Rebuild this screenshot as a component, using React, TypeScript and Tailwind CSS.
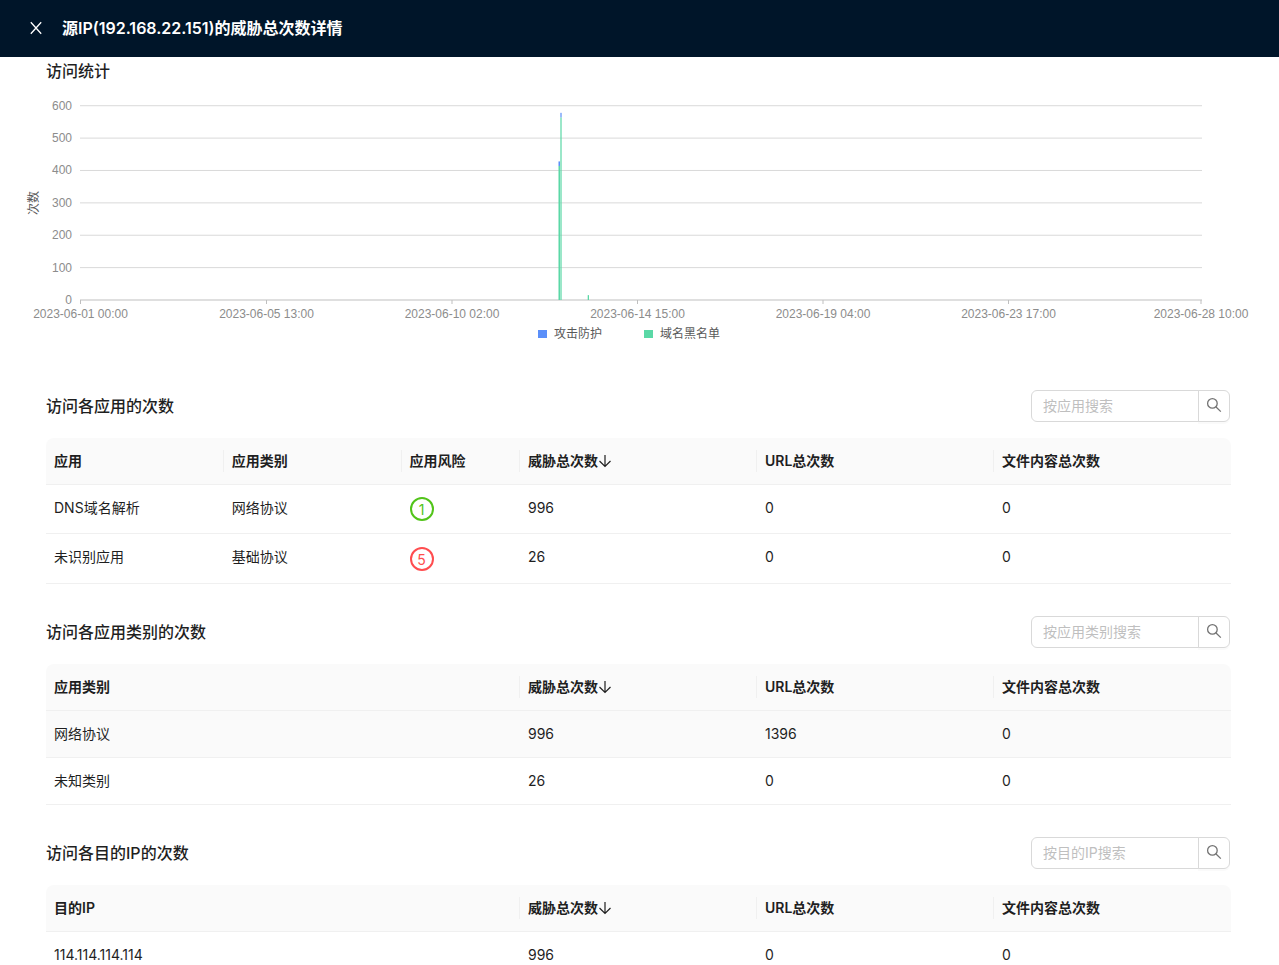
import React, { useState } from 'react';

interface Column {
  key: string;
  title: string;
  width: string;
  sorted?: boolean;
}

interface StatTableProps {
  id: string;
  title: string;
  placeholder: string;
  columns: Column[];
  rows: Record<string, string>[];
  activeRow?: number;
}

const countColumns: Column[] = [
  { key: 'threat', title: '威胁总次数', width: 'w-[20%]', sorted: true },
  { key: 'url', title: 'URL总次数', width: 'w-[20%]' },
  { key: 'file', title: '文件内容总次数', width: 'w-[20%]' },
];

const appColumns: Column[] = [
  { key: 'app', title: '应用', width: 'w-[15%]' },
  { key: 'category', title: '应用类别', width: 'w-[15%]' },
  { key: 'risk', title: '应用风险', width: 'w-[10%]' },
  ...countColumns,
];

const appRows = [
  { app: 'DNS域名解析', category: '网络协议', risk: '1', threat: '996', url: '0', file: '0' },
  { app: '未识别应用', category: '基础协议', risk: '5', threat: '26', url: '0', file: '0' },
];

const categoryRows = [
  { category: '网络协议', threat: '996', url: '1396', file: '0' },
  { category: '未知类别', threat: '26', url: '0', file: '0' },
];

const ipRows = [{ ip: '114.114.114.114', threat: '996', url: '0', file: '0' }];

const CloseIcon: React.FC = () => (
  <svg viewBox="0 0 16 16" className="h-4 w-4" fill="none" stroke="currentColor" strokeWidth="1.3">
    <path d="M2.8 2.2 13.2 13.8M13.2 2.2 2.8 13.8" />
  </svg>
);

const SearchIcon: React.FC = () => (
  <svg viewBox="0 0 16 16" className="h-4 w-4" fill="none" stroke="currentColor" strokeWidth="1.3">
    <circle cx="6.4" cy="6.4" r="4.8" />
    <path d="m9.8 9.8 5 4.8" />
  </svg>
);

const ArrowDownIcon: React.FC = () => (
  <svg viewBox="0 0 14 14" className="h-3.5 w-3.5" fill="none" stroke="currentColor" strokeWidth="1.2">
    <path d="M7 1v11.4M1.5 7 7 12.4 12.5 7" />
  </svg>
);

const RiskBadge: React.FC<{ level: string }> = ({ level }) => (
  <span
    className={`flex h-6 w-6 items-center justify-center rounded-full border-2 pt-0.5 leading-5 ${
      Number(level) > 3 ? 'border-[#ff4d4f] text-[#ff4d4f]' : 'border-[#52c41a] text-[#52c41a]'
    }`}
  >
    {level}
  </span>
);

const StatTable: React.FC<StatTableProps> = ({ id, title, placeholder, columns, rows, activeRow }) => {
  const [keyword, setKeyword] = useState('');
  const hasRisk = columns.some((column) => column.key === 'risk');
  const visibleRows = rows.filter((row) => row[columns[0].key].includes(keyword));

  return (
    <section className="mt-8">
      <div className="mb-4 flex items-center justify-between pr-px">
        <h2 className="text-base font-medium">{title}</h2>
        <form className="flex h-8" onSubmit={(e) => e.preventDefault()}>
          <input
            id={id}
            type="text"
            aria-label={placeholder}
            placeholder={placeholder}
            value={keyword}
            onChange={(e) => setKeyword(e.target.value)}
            className="w-[168px] rounded-l-md border border-[#d9d9d9] px-[11px] text-sm outline-none placeholder:text-[#bfbfbf]"
          />
          <button
            type="submit"
            aria-label="搜索"
            className="-ml-px flex w-8 items-center justify-center rounded-r-md border border-[#d9d9d9] pb-0.5 text-[#737373] shadow-[0_2px_0_rgba(0,0,0,0.02)]"
          >
            <SearchIcon />
          </button>
        </form>
      </div>

      <table className="w-full table-fixed border-separate border-spacing-0 text-left text-sm leading-[22px]">
        <thead>
          <tr>
            {columns.map((column, index) => (
              <th
                key={column.key}
                scope="col"
                className={`relative border-b border-[#f0f0f0] bg-[#fafafa] px-2 py-3 font-semibold first:rounded-tl-lg last:rounded-tr-lg ${column.width}`}
              >
                <span className="flex items-center">
                  {column.title}
                  {column.sorted && <ArrowDownIcon />}
                </span>
                {/* Column divider */}
                {index < columns.length - 1 && (
                  <span className="absolute top-3 right-0 h-[22px] w-px bg-[#f0f0f0]" />
                )}
              </th>
            ))}
          </tr>
        </thead>
        <tbody>
          {visibleRows.map((row, index) => (
            <tr
              key={row[columns[0].key]}
              className={`${index === activeRow ? 'bg-[#fafafa]' : 'hover:bg-[#fafafa]'} ${
                hasRisk ? 'h-[49px] last:h-[50px]' : 'h-[47px]'
              }`}
            >
              {columns.map((column) => (
                <td
                  key={column.key}
                  className={`border-b border-[#f0f0f0] px-2 py-3 ${
                    column.key === 'risk' ? 'align-middle' : 'align-top'
                  }`}
                >
                  {column.key === 'risk' ? <RiskBadge level={row.risk} /> : row[column.key]}
                </td>
              ))}
            </tr>
          ))}
        </tbody>
      </table>
    </section>
  );
};

const yTicks = [600, 500, 400, 300, 200, 100, 0];

const xTicks = [
  { x: 80.5, label: '2023-06-01 00:00' },
  { x: 266.5, label: '2023-06-05 13:00' },
  { x: 452, label: '2023-06-10 02:00' },
  { x: 637.5, label: '2023-06-14 15:00' },
  { x: 823, label: '2023-06-19 04:00' },
  { x: 1008.5, label: '2023-06-23 17:00' },
  { x: 1201, label: '2023-06-28 10:00' },
];

const bars = [
  { x: 558.5, width: 1.5, blacklist: 414, attack: 14 },
  { x: 560.4, width: 1.2, blacklist: 564, attack: 14 },
  { x: 587.7, width: 1.3, blacklist: 15, attack: 0 },
];

const baseline = 215;
const toHeight = (value: number) => value * 0.3238;

const VisitChart: React.FC = () => (
  <svg
    viewBox="0 0 1279 273"
    className="block h-auto w-full font-['Liberation_Sans','Noto_Sans_CJK_SC',sans-serif] text-xs"
    role="img"
    aria-label="访问统计"
  >
    {yTicks.map((tick) => {
      const y = baseline - toHeight(tick);
      return (
        <g key={tick}>
          <line x1="80" x2="1202" y1={y} y2={y} stroke={tick === 0 ? '#bfbfbf' : '#d9d9d9'} />
          <text x="72" y={y + 4} textAnchor="end" fill="#8c8c8c">
            {tick}
          </text>
        </g>
      );
    })}
    {xTicks.map((tick) => (
      <g key={tick.label}>
        <line x1={tick.x} x2={tick.x} y1={baseline} y2={baseline + 4} stroke="#bfbfbf" />
        <text x={tick.x} y={baseline + 18} textAnchor="middle" fill="#8c8c8c">
          {tick.label}
        </text>
      </g>
    ))}
    <text transform={`translate(38 ${baseline - 97}) rotate(-90)`} textAnchor="middle" fill="#595959">
      次数
    </text>

    {/* Stacked bars */}
    {bars.map((bar) => (
      <g key={bar.x}>
        <rect
          x={bar.x}
          y={baseline - toHeight(bar.blacklist)}
          width={bar.width}
          height={toHeight(bar.blacklist)}
          fill="#5ad8a6"
        />
        <rect
          x={bar.x}
          y={baseline - toHeight(bar.blacklist + bar.attack)}
          width={bar.width}
          height={toHeight(bar.attack)}
          fill="#5b8ff9"
        />
      </g>
    ))}

    {/* Legend */}
    <rect x="538" y="245" width="9" height="8" fill="#5b8ff9" />
    <text x="554" y="253" fill="#595959">
      攻击防护
    </text>
    <rect x="644" y="245" width="9" height="8" fill="#5ad8a6" />
    <text x="660" y="253" fill="#595959">
      域名黑名单
    </text>
  </svg>
);

const App: React.FC = () => {
  return (
    <div className="min-h-screen bg-white font-['Inter','Noto_Sans_CJK_SC',sans-serif] text-[#1f1f1f]">
      <header className="flex h-[57px] items-center bg-[#001529] px-7 pb-0.5 text-white">
        <button type="button" aria-label="关闭" className="mr-[18px]">
          <CloseIcon />
        </button>
        <h1 className="text-base font-semibold">源IP(192.168.22.151)的威胁总次数详情</h1>
      </header>

      <main className="pb-8">
        <h2 className="px-[46px] py-0.5 text-base font-medium">访问统计</h2>
        <VisitChart />
        <div className="pr-12 pl-[46px]">
          <StatTable id="search-app" title="访问各应用的次数" placeholder="按应用搜索" columns={appColumns} rows={appRows} />
          <StatTable
            id="search-category"
            title="访问各应用类别的次数"
            placeholder="按应用类别搜索"
            columns={[{ key: 'category', title: '应用类别', width: 'w-[40%]' }, ...countColumns]}
            rows={categoryRows}
            activeRow={0}
          />
          <StatTable
            id="search-ip"
            title="访问各目的IP的次数"
            placeholder="按目的IP搜索"
            columns={[{ key: 'ip', title: '目的IP', width: 'w-[40%]' }, ...countColumns]}
            rows={ipRows}
          />
        </div>
      </main>
    </div>
  );
};

export default App;
